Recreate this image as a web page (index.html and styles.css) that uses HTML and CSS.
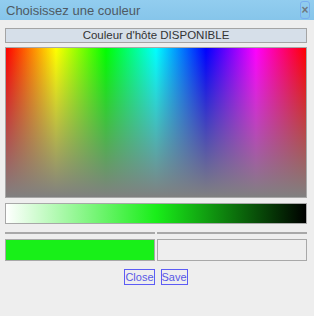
FILE: index.html
```html
<!DOCTYPE html>
<html lang="fr">
<head>
    <meta charset="UTF-8">
    <title>Choisissez une couleur</title>
    <link rel="stylesheet" href="styles.css">
</head>
<body>
    <div class="dialog">
        <div class="title-bar">
            <span class="title">Choisissez une couleur</span>
            <span class="close-x">&#215;</span>
        </div>

        <div class="content">
            <div class="label-box">Couleur d'hôte DISPONIBLE</div>

            <!-- hue / saturation picker -->
            <div class="spectrum"><div class="spectrum-fade"></div></div>

            <!-- lightness bar for the selected hue -->
            <div class="lightness"></div>

            <div class="preview">
                <div class="preview-col">
                    <div class="sep"></div>
                    <div class="swatch current"></div>
                </div>
                <div class="preview-col">
                    <div class="sep"></div>
                    <div class="swatch"></div>
                </div>
            </div>

            <div class="buttons">
                <button class="btn">Close</button>
                <button class="btn">Save</button>
            </div>
        </div>
    </div>
</body>
</html>
```

FILE: styles.css
```css
body {
    margin: 0;
    padding: 0;
    background-color: #eeeeee;
    font-family: "Liberation Sans", Arial, sans-serif;
}

.dialog {
    width: 314px;
    height: 316px;
}

.title-bar {
    height: 20px;
    background: linear-gradient(to bottom, #92cdef, #86c5ea);
    display: flex;
    align-items: center;
    justify-content: space-between;
    padding: 0 4px 0 6px;
    box-sizing: border-box;
}

.title {
    font-size: 13px;
    color: #4f5a63;
}

.close-x {
    width: 8px;
    height: 16px;
    border: 1px solid #78aef0;
    border-radius: 3px;
    font-size: 12px;
    line-height: 16px;
    text-align: center;
    color: #6f7880;
    font-weight: bold;
}

.content {
    padding: 8px 0 0 5px;
    width: 302px;
    display: flex;
    flex-direction: column;
}

.label-box {
    height: 13px;
    border: 1px solid #a4a4a4;
    background-color: #d6dfe9;
    font-size: 11.5px;
    line-height: 13px;
    text-align: center;
    color: #333333;
}

.spectrum {
    margin-top: 4px;
    height: 149px;
    border: 1px solid #a8a8a8;
    background: linear-gradient(to right, #ff0000, #ffff00, #00ff00, #00ffff, #0000ff, #ff00ff, #ff0000);
}

.spectrum-fade {
    height: 100%;
    background: linear-gradient(to bottom, rgba(128, 128, 128, 0), rgba(128, 128, 128, 1));
}

.lightness {
    margin-top: 5px;
    height: 19px;
    border: 1px solid #a8a8a8;
    background: linear-gradient(to right, #ffffff, #19ee19 50%, #000000);
}

.preview {
    margin-top: 8px;
    display: flex;
    gap: 2px;
}

.preview-col {
    flex: 1;
    display: flex;
    flex-direction: column;
}

.sep {
    height: 2px;
    background-color: #a8a8a8;
}

.swatch {
    margin-top: 5px;
    height: 20px;
    border: 1px solid #a8a8a8;
}

.swatch.current {
    background-color: #18f018;
}

.buttons {
    margin-top: 8px;
    display: flex;
    justify-content: center;
    gap: 6px;
}

.btn {
    font-family: "Liberation Sans", Arial, sans-serif;
    font-size: 11px;
    line-height: 14px;
    height: 16px;
    padding: 0;
    margin: 0;
    border: 1px solid #5c5cf5;
    background-color: #eeeeee;
    color: #5858e6;
    cursor: pointer;
}
```
